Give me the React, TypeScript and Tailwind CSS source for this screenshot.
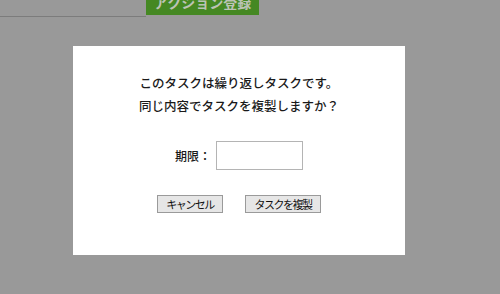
import React from "react";

const jp = { fontFamily: '"Noto Sans CJK JP", "Noto Sans", sans-serif' };

export default function App() {
  return (
    <div className="w-[500px] h-[294px] bg-[#999999] overflow-hidden relative" style={jp}>
      <div className="flex items-start h-[16px]">
        <div className="w-[146px] h-[17px] border-b border-[#7c7c7c]" />
        <div className="w-[113px] h-[15px] bg-[#458823] overflow-hidden flex items-end justify-center">
          <span className="text-[14px] font-bold leading-[14px] text-[#bcc3b5] mb-[6px]">アクション登録</span>
        </div>
      </div>
      <div className="ml-[73px] mt-[30px] w-[332px] h-[209px] bg-white flex flex-col items-center pt-[25px]">
        <div className="text-[12.5px] leading-[23px] text-[#1a1a1a] text-center font-medium">
          <div>このタスクは繰り返しタスクです。</div>
          <div>同じ内容でタスクを複製しますか？</div>
        </div>
        <div className="flex items-center mt-[24px]">
          <span className="text-[12px] text-[#1a1a1a] mr-[5px] font-medium">期限：</span>
          <div className="w-[87px] h-[29px] border border-[#b4b4b4] bg-white" />
        </div>
        <div className="flex items-center gap-[22px] mt-[25px]">
          <button className="w-[66px] h-[18px] border border-[#9a9a9a] bg-[#e6e6e6] text-[11px] leading-[16px] tracking-[-1.5px] text-[#111] flex items-center justify-center">
            キャンセル
          </button>
          <button className="w-[76px] h-[18px] border border-[#9a9a9a] bg-[#e6e6e6] text-[11px] leading-[16px] tracking-[-1.5px] text-[#111] flex items-center justify-center">
            タスクを複製
          </button>
        </div>
      </div>
    </div>
  );
}
